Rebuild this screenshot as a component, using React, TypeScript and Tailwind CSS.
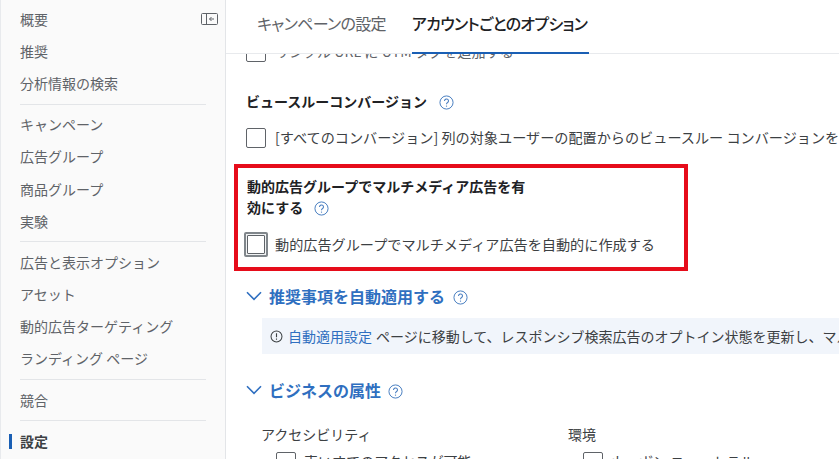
import React from "react";

const font = { fontFamily: '"Noto Sans CJK JP","Liberation Sans",sans-serif' };

function NavRow({ label, active }: { label: string; active?: boolean }) {
  return (
    <div className={`relative flex h-[32.2px] items-center pl-[19px] text-[14px] ${active ? "font-bold text-[#3c4043]" : "text-[#5f6368]"}`}>
      {active && <span className="absolute left-[8px] top-[9px] h-[15px] w-[3px] bg-[#1a5fb4]" />}
      {label}
    </div>
  );
}

function Divider() {
  return <div className="ml-[19px] my-[4px] h-px w-[186px] bg-[#e3e5e8]" />;
}

function Help({ className = "" }: { className?: string }) {
  return (
    <svg width="15" height="15" viewBox="0 0 16 16" className={className} fill="none">
      <circle cx="8" cy="8" r="7" stroke="#3f77bd" strokeWidth="1" />
      <path d="M5.9 6.3a2.1 2.1 0 1 1 3.3 1.7c-.8.5-1.2.9-1.2 1.8" stroke="#3f77bd" strokeWidth="1.1" />
      <circle cx="8" cy="11.8" r=".7" fill="#3f77bd" />
    </svg>
  );
}

function Box({ className = "" }: { className?: string }) {
  return <span className={`block shrink-0 rounded-[2px] border border-[#5f6368] bg-white ${className}`} />;
}

function Chevron() {
  return (
    <svg width="16" height="10" viewBox="0 0 16 10" fill="none" className="shrink-0">
      <path d="M1 1.2 8 8.4l7-7.2" stroke="#2f6fc0" strokeWidth="1.6" />
    </svg>
  );
}

export default function App() {
  return (
    <div style={font} className="flex h-[459px] w-[839px] overflow-hidden bg-white">
      <aside className="relative h-full w-[226px] shrink-0 border-r border-r-[#e3e5e8] border-l border-l-[#e8eaed] bg-[#fafafa] pt-[3px]">
        <svg width="17" height="12" viewBox="0 0 17 12" fill="none" className="absolute left-[200px] top-[13px]">
          <rect x=".5" y=".5" width="16" height="11" rx="1" stroke="#5f6368" />
          <path d="M5.5 1v10" stroke="#5f6368" />
          <path d="M13 6H8.5m2-2-2 2 2 2" stroke="#5f6368" />
        </svg>
        <NavRow label="概要" />
        <NavRow label="推奨" />
        <NavRow label="分析情報の検索" />
        <Divider />
        <NavRow label="キャンペーン" />
        <NavRow label="広告グループ" />
        <NavRow label="商品グループ" />
        <NavRow label="実験" />
        <Divider />
        <NavRow label="広告と表示オプション" />
        <NavRow label="アセット" />
        <NavRow label="動的広告ターゲティング" />
        <NavRow label="ランディング ページ" />
        <Divider />
        <NavRow label="競合" />
        <Divider />
        <NavRow label="設定" active />
      </aside>

      <main className="flex h-full min-w-0 flex-1 flex-col">
        <header className="flex h-[54px] shrink-0 items-stretch border-b border-[#e8eaed] pl-[31px] text-[16px] tracking-[-0.7px] [font-feature-settings:'palt']">
          <div className="flex items-center pb-[7px] text-[#5f6368]">キャンペーンの設定</div>
          <div className="relative ml-[26px] flex items-center pb-[7px] pr-[2px] font-medium text-[#202124]">
            アカウントごとのオプション
            <span className="absolute -bottom-px left-0 right-0 h-[2px] bg-[#1a5fb4]" />
          </div>
        </header>

        <div className="min-h-0 flex-1 overflow-hidden pl-[20px] text-[14.15px] text-[#3c4043]">
          <div className="-mt-[12px] flex h-[20px] items-center gap-[9px] text-[#5f6368]">
            <Box className="h-[20px] w-[20px]" />
            <span className="whitespace-nowrap">リンクル URL に UTM タグを追加する</span>
          </div>

          <div className="mt-[29px] flex h-[20px] items-center text-[14px] font-bold text-[#202124]">
            ビュースルーコンバージョン
            <Help className="ml-[12px] mt-[2px]" />
          </div>

          <div className="mt-[17px] flex h-[20px] items-center gap-[9px]">
            <Box className="h-[20px] w-[20px]" />
            <span className="whitespace-nowrap">[すべてのコンバージョン] 列の対象ユーザーの配置からのビュースルー コンバージョンを含める</span>
          </div>

          <section className="-ml-[12px] mt-[16px] h-[107px] w-[454px] border-[4px] border-[#e60c1a] pl-[9px] pt-[8px]">
            <div className="text-[14px] font-bold leading-[21px] text-[#202124]">
              動的広告グループでマルチメディア広告を有
              <br />
              <span className="inline-flex items-center">
                効にする
                <Help className="ml-[11px] mt-[2px]" />
              </span>
            </div>
            <div className="-ml-[3px] mt-[14px] flex items-center gap-[7px]">
              <span className="flex h-[25px] w-[24px] shrink-0 items-center justify-center rounded-[2px] border-2 border-[#80868b] bg-[#f1f3f4]">
                <span className="block h-[19px] w-[18px] rounded-[1px] border border-[#5f6368] bg-white" />
              </span>
              <span className="whitespace-nowrap">動的広告グループでマルチメディア広告を自動的に作成する</span>
            </div>
          </section>

          <div className="mt-[14px] flex h-[22px] items-center">
            <Chevron />
            <span className="ml-[7px] text-[16px] font-bold text-[#2f6fc0]">推奨事項を自動適用する</span>
            <Help className="ml-[8px] mt-[2px]" />
          </div>

          <div className="ml-[16px] mt-[11px] flex h-[36px] items-center whitespace-nowrap bg-[#f1f5fb] pl-[8px] text-[14px]">
            <svg width="13" height="13" viewBox="0 0 14 14" fill="none" className="mr-[5px] shrink-0">
              <circle cx="7" cy="7" r="5.9" stroke="#3c4043" strokeWidth="1.1" />
              <path d="M7 3.6v4.2M7 9.2v1.2" stroke="#3c4043" strokeWidth="1.2" />
            </svg>
            <span className="text-[#2f6fc0]">自動適用設定</span>
            <span className="ml-[4px]">ページに移動して、レスポンシブ検索広告のオプトイン状態を更新し、マルチメディア広告を設定します</span>
          </div>

          <div className="mt-[25px] flex h-[22px] items-center">
            <Chevron />
            <span className="ml-[7px] text-[16px] font-bold text-[#2f6fc0]">ビジネスの属性</span>
            <Help className="ml-[7px] mt-[2px]" />
          </div>

          <div className="ml-[15px] mt-[22px] grid grid-cols-[307px_1fr] text-[14px]">
            <div>
              <div className="h-[22px] leading-[22px]">アクセシビリティ</div>
              <div className="ml-[15px] mt-[6px] flex items-center gap-[8px]">
                <Box className="h-[20px] w-[20px]" />
                <span className="whitespace-nowrap">車いすでのアクセスが可能</span>
              </div>
            </div>
            <div>
              <div className="h-[22px] leading-[22px]">環境</div>
              <div className="ml-[15px] mt-[6px] flex items-center gap-[8px]">
                <Box className="h-[20px] w-[20px]" />
                <span className="whitespace-nowrap">カーボン ニュートラル</span>
              </div>
            </div>
          </div>
        </div>
      </main>
    </div>
  );
}
